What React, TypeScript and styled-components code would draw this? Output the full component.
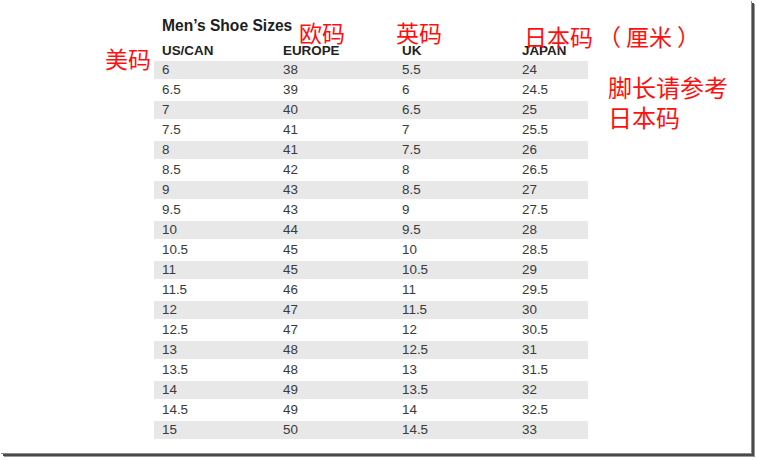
import { createGlobalStyle } from "styled-components";
import styled from "styled-components";

interface SizeRow {
  us: string;
  eu: string;
  uk: string;
  jp: string;
}

const sizes: SizeRow[] = [
  { us: "6", eu: "38", uk: "5.5", jp: "24" },
  { us: "6.5", eu: "39", uk: "6", jp: "24.5" },
  { us: "7", eu: "40", uk: "6.5", jp: "25" },
  { us: "7.5", eu: "41", uk: "7", jp: "25.5" },
  { us: "8", eu: "41", uk: "7.5", jp: "26" },
  { us: "8.5", eu: "42", uk: "8", jp: "26.5" },
  { us: "9", eu: "43", uk: "8.5", jp: "27" },
  { us: "9.5", eu: "43", uk: "9", jp: "27.5" },
  { us: "10", eu: "44", uk: "9.5", jp: "28" },
  { us: "10.5", eu: "45", uk: "10", jp: "28.5" },
  { us: "11", eu: "45", uk: "10.5", jp: "29" },
  { us: "11.5", eu: "46", uk: "11", jp: "29.5" },
  { us: "12", eu: "47", uk: "11.5", jp: "30" },
  { us: "12.5", eu: "47", uk: "12", jp: "30.5" },
  { us: "13", eu: "48", uk: "12.5", jp: "31" },
  { us: "13.5", eu: "48", uk: "13", jp: "31.5" },
  { us: "14", eu: "49", uk: "13.5", jp: "32" },
  { us: "14.5", eu: "49", uk: "14", jp: "32.5" },
  { us: "15", eu: "50", uk: "14.5", jp: "33" },
];

export default function App() {
  return (
    <>
      <GlobalStyle />
      <Page>
        <Frame>
          <Table>
            <Title>Men’s Shoe Sizes</Title>
            <HeaderRow>
              <HeadCell>US/CAN</HeadCell>
              <HeadCell>EUROPE</HeadCell>
              <HeadCell>UK</HeadCell>
              <HeadCell>JAPAN</HeadCell>
            </HeaderRow>
            {sizes.map((s, i) => (
              <Row key={s.us} $shaded={i % 2 === 0}>
                <Cell>{s.us}</Cell>
                <Cell>{s.eu}</Cell>
                <Cell>{s.uk}</Cell>
                <Cell>{s.jp}</Cell>
              </Row>
            ))}
          </Table>

          {/* red annotations written over the chart */}
          <Note $x={105} $y={43}>美码</Note>
          <Note $x={299} $y={17}>欧码</Note>
          <Note $x={396} $y={17}>英码</Note>
          <Note $x={524} $y={21}>
            日本码<Paren>（</Paren>厘米<Paren>）</Paren>
          </Note>
          <Note $x={608} $y={72} $size={24}>
            脚长请参考
            <br />
            日本码
          </Note>
        </Frame>
      </Page>
    </>
  );
}

/* ---------------- styled-components ---------------- */

const GlobalStyle = createGlobalStyle`
  html, body {
    margin: 0;
    padding: 0;
    background: #ffffff;
  }
`;

const Page = styled.div`
  width: 757px;
  height: 460px;
  background: #ffffff;
`;

const Frame = styled.div`
  position: relative;
  width: 751px;
  height: 453px;
  background: #ffffff;
  box-shadow: 1px 1px 0 #8c8c8c, 3px 3px 0 #4a4a4a, 4px 4px 0 #9a9a9a;
`;

const Table = styled.div`
  display: flex;
  flex-direction: column;
  margin-left: 154px;
  width: 434px;
  padding-top: 16px;
  font-family: "Liberation Sans", Arial, sans-serif;
`;

const Title = styled.div`
  padding-left: 8px;
  font-size: 15.6px;
  line-height: 20px;
  font-weight: bold;
  color: #1e1e1e;
`;

const columns = "121px 119px 120px 1fr";

const HeaderRow = styled.div`
  display: grid;
  grid-template-columns: ${columns};
  align-items: end;
  height: 25px;
  padding-bottom: 2px;
  box-sizing: border-box;
`;

const HeadCell = styled.div`
  padding-left: 8px;
  font-size: 13.4px;
  line-height: 16px;
  font-weight: bold;
  color: #222222;
`;

const Row = styled.div<{ $shaded: boolean }>`
  display: grid;
  grid-template-columns: ${columns};
  align-items: center;
  height: ${(p) => (p.$shaded ? "18px" : "22px")};
  background: ${(p) => (p.$shaded ? "#e8e8e8" : "#ffffff")};
`;

const Cell = styled.div`
  padding-left: 8px;
  font-size: 13.4px;
  line-height: 16px;
  color: #3a3a3a;
`;

const Note = styled.div<{ $x: number; $y: number; $size?: number }>`
  position: absolute;
  left: ${(p) => p.$x}px;
  top: ${(p) => p.$y}px;
  font-family: "Noto Sans CJK SC", sans-serif;
  font-size: ${(p) => p.$size ?? 23}px;
  line-height: 30px;
  color: #ff1010;
  white-space: nowrap;
`;

/* full-width brackets keep their wide spacing */
const Paren = styled.span`
  padding: 0 5px;
`;
